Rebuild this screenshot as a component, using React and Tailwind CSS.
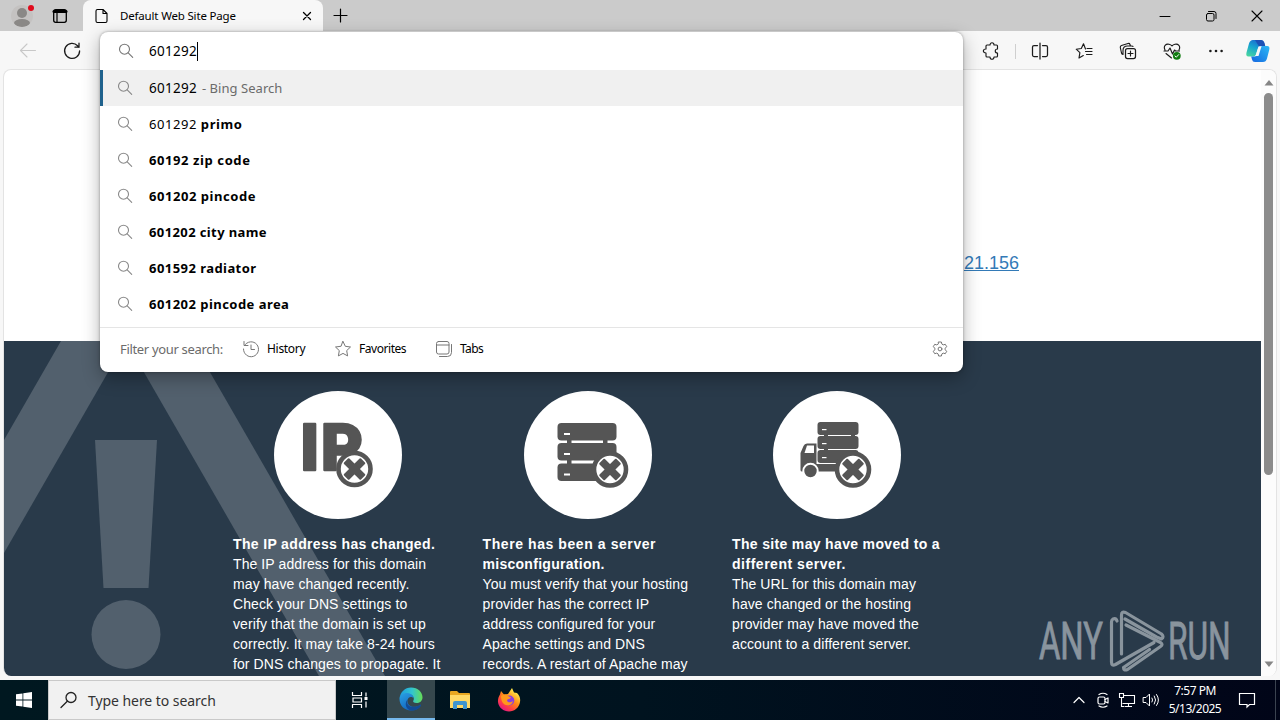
import { useId } from 'react';

const SUGGESTIONS = [
  { match: '601292 ', rest: 'primo', spacing: 'tracking-[0.6px]' },
  { match: '', rest: '60192 zip code', spacing: 'tracking-[0.59px]' },
  { match: '', rest: '601202 pincode', spacing: 'tracking-[0.55px]' },
  { match: '', rest: '601202 city name', spacing: 'tracking-[0.39px]' },
  { match: '', rest: '601592 radiator', spacing: 'tracking-[0.45px]' },
  { match: '', rest: '601202 pincode area', spacing: 'tracking-[0.46px]' },
];

const REASONS = [
  {
    icon: IpIcon,
    title: [['The IP address has changed.', 'tracking-[0.35px]']],
    lines: [
      'The IP address for this domain',
      'may have changed recently.',
      'Check your DNS settings to',
      'verify that the domain is set up',
      'correctly. It may take 8-24 hours',
      'for DNS changes to propagate. It',
    ],
  },
  {
    icon: ServerIcon,
    title: [
      ['There has been a server', 'tracking-[0.58px]'],
      ['misconfiguration.', 'tracking-[0.28px]'],
    ],
    lines: [
      'You must verify that your hosting',
      'provider has the correct IP',
      'address configured for your',
      'Apache settings and DNS',
      'records. A restart of Apache may',
    ],
  },
  {
    icon: TruckIcon,
    title: [
      ['The site may have moved to a', 'tracking-[0.34px]'],
      ['different server.', 'tracking-[0.52px]'],
    ],
    lines: [
      'The URL for this domain may',
      'have changed or the hosting',
      'provider may have moved the',
      'account to a different server.',
    ],
  },
];

function Icon({ size = 16, className = '', children, ...rest }) {
  return (
    <svg
      width={size}
      height={size}
      viewBox={`0 0 ${size} ${size}`}
      fill="none"
      stroke="currentColor"
      strokeLinecap="round"
      strokeLinejoin="round"
      className={`shrink-0 ${className}`}
      {...rest}
    >
      {children}
    </svg>
  );
}

function SearchIcon({ className }) {
  return (
    <Icon className={className}>
      <circle cx="6.5" cy="6.2" r="5" strokeWidth="1.1" />
      <path d="M10.2 9.8 14.7 14.3" strokeWidth="1.1" />
    </Icon>
  );
}

// Ring with a cross, shared by the three round illustrations
function CrossBadge({ x, y }) {
  return (
    <g transform={`translate(${x} ${y})`}>
      <circle r="16" fill="#fff" stroke="#555" strokeWidth="4.6" />
      <g fill="#555" transform="rotate(45)">
        <rect x="-3.8" y="-12" width="7.6" height="24" rx="1" />
        <rect x="-12" y="-3.8" width="24" height="7.6" rx="1" />
      </g>
    </g>
  );
}

function IpIcon() {
  return (
    <svg width="128" height="128" viewBox="0 0 128 128" className="block">
      <circle cx="64" cy="64" r="64" fill="#fff" />
      <g fill="#555" stroke="#555" strokeWidth="2.4" strokeLinejoin="round" fontFamily="Roboto, sans-serif" fontWeight="900" fontSize="64">
        <text x="26" y="78.5">I</text>
        <text x="47" y="78.5" textLength="42" lengthAdjust="spacingAndGlyphs">P</text>
      </g>
      <CrossBadge x={80.5} y={78} />
    </svg>
  );
}

function ServerIcon() {
  return (
    <svg width="128" height="128" viewBox="0 0 128 128" className="block">
      <circle cx="64" cy="64" r="64" fill="#fff" />
      <g fill="#555">
        <rect x="43" y="47" width="4.5" height="30" />
        <rect x="79" y="47" width="4.5" height="8" />
        <rect x="33.5" y="32" width="59" height="17.5" rx="4" />
        <rect x="33.5" y="52" width="59" height="17.5" rx="4" />
        <rect x="33.5" y="72.5" width="59" height="17.5" rx="4" />
      </g>
      <g fill="#fff">
        <rect x="40" y="42" width="6" height="2" />
        <rect x="40" y="62" width="6" height="2" />
        <rect x="40" y="82.5" width="6" height="2" />
      </g>
      <CrossBadge x={86} y={78.5} />
    </svg>
  );
}

function TruckIcon() {
  return (
    <svg width="128" height="128" viewBox="0 0 128 128" className="block">
      <circle cx="64" cy="64" r="64" fill="#fff" />
      <g fill="#555">
        <rect x="51" y="40" width="4" height="30" />
        <rect x="78" y="40" width="4" height="18" />
        <rect x="44.5" y="31" width="41" height="13" rx="3" />
        <rect x="44.5" y="45" width="41" height="13" rx="3" />
        <rect x="44.5" y="59" width="41" height="13" rx="3" />
        <rect x="40" y="73" width="40" height="7.5" />
        <path d="M43.5 52.5H34Q31.5 52.5 30.5 55L27.5 62V79Q27.5 80.500 29 80.500H43.500Z" />
      </g>
      <path d="M34 54.500H41V62H31.500Z" fill="#fff" />
      <g fill="#fff">
        <rect x="49" y="38" width="4.500" height="1.200" />
        <rect x="49" y="52" width="4.500" height="1.200" />
        <rect x="49" y="66" width="4.500" height="1.200" />
      </g>
      <circle cx="37.500" cy="80" r="7.200" fill="#555" stroke="#fff" strokeWidth="2" />
      <CrossBadge x={80} y={78.5} />
    </svg>
  );
}

function TabStrip() {
  return (
    <div className="flex h-[31px] bg-[#cbcbcb] text-black">
      <div className="ml-[11px] mt-[5px] h-[22px] w-[22px] overflow-hidden rounded-full bg-[#c4c2c1]">
        <div className="mx-auto mt-[3px] h-[10px] w-[10px] rounded-full bg-[#8a8886]" />
        <div className="mx-auto mt-[1px] h-[8px] w-[16px] rounded-[50%] bg-[#8a8886]" />
      </div>
      <div className="-ml-[5px] mt-[5px] h-[6px] w-[6px] rounded-full bg-[#e00b1c]" />
      <Icon className="ml-[18px] mt-2">
        <rect x="1.700" y="1.700" width="12.600" height="12.600" rx="2" strokeWidth="1.300" />
        <path d="M2 3.500h12" strokeWidth="3" />
        <path d="M5 4v10" strokeWidth="1.200" />
      </Icon>
      <div className="ml-[15px] flex h-[31px] w-[240px] items-center rounded-t-lg bg-[#f7f7f7] pl-[11px] pr-[11px]">
        <Icon>
          <path d="M3.500 1.500h5.500l4 4v7.500q0 1.500-1.500 1.500h-8q-1.500 0-1.500-1.500v-10q0-1.500 1.500-1.500zM9 1.500v4h4" strokeWidth="1.100" />
        </Icon>
        <span className="ml-[10px] whitespace-nowrap font-['Noto_Sans',sans-serif] text-[11.5px] tracking-[-0.17px]">Default Web Site Page</span>
        <Icon size={10} className="ml-auto">
          <path d="M1.500 1.500l7 7M8.500 1.500l-7 7" strokeWidth="1.300" />
        </Icon>
      </div>
      <Icon className="ml-[9px] mt-2">
        <path d="M8.500 1v13M2 7.500h13" strokeWidth="1.200" />
      </Icon>
      <div className="ml-auto flex items-center gap-[34px] pr-[17px]">
        <Icon size={12}><path d="M1 6.500h10" /></Icon>
        <Icon size={12}>
          <rect x="1.500" y="3.500" width="7.500" height="7.500" rx="1.500" />
          <path d="M3.500 1.500h5.500q2 0 2 2v5" />
        </Icon>
        <Icon size={12}><path d="M1 1l10 10M11 1 1 11" strokeWidth="1.100" /></Icon>
      </div>
    </div>
  );
}

function CopilotLogo() {
  const id = useId();
  return (
    <svg width="26" height="26" viewBox="0 0 26 26" className="shrink-0">
      <defs>
        <linearGradient id={`${id}a`} x1="0" y1="1" x2="0.500" y2="0">
          <stop offset="0" stopColor="#4fdc9a" />
          <stop offset="0.600" stopColor="#17a5cf" />
          <stop offset="1" stopColor="#1a6fd0" />
        </linearGradient>
        <linearGradient id={`${id}b`} x1="0" y1="1" x2="1" y2="0">
          <stop offset="0" stopColor="#1567e0" />
          <stop offset="1" stopColor="#2bb8f5" />
        </linearGradient>
      </defs>
      <path d="M8 2h8q2.500 0 3.200 2.500l1 3.500h-4q-2.500 0-3.200 2.500l-2 6q-.8 2-2.500 2h-5q-3 0-2-4l2.500-9q1-3.500 4-3.500z" fill={`url(#${id}a)`} />
      <path d="M10 2h6q2.500 0 3.200 2.500l1 3.500h-4l-2.500 0z" fill="#1c51b5" />
      <path d="M18 24h-8q-2.500 0-3-2.500l-.8-3h3.300q2.500 0 3.200-2.500l2-6q.8-2 2.500-2h5q3 0 2 4l-2.200 8.500q-1 3.500-4 3.500z" fill={`url(#${id}b)`} />
      <path d="M13.500 8.500h3l-3 9.500h-3z" fill="#f7f7f7" />
    </svg>
  );
}

function Toolbar() {
  return (
    <div className="flex h-[38px] items-center bg-[#f7f7f7] pt-[2px] text-[#1b1b1b]">
      <Icon size={18} className="ml-[19px] text-[#c8c8c8]">
        <path d="M16.500 8.500H1.500M8 2 1.500 8.500 8 15" strokeWidth="1.100" />
      </Icon>
      <Icon size={18} className="ml-[26px]">
        <path d="M16.600 9a7.500 7.500 0 1 1-2-5.200l1.400 1.400M16 1.200v4h-4" strokeWidth="1.300" />
      </Icon>
      <div className="ml-auto flex items-center">
        <Icon size={18}>
          <path d="M5 3h3c0-3 4-3 4 0h2.500q1 0 1 1v3c-3 0-3 4 0 4v3q0 1-1 1H12c0 3-4 3-4 0H5q-1 0-1-1v-3c-3.500 0-3.500-4 0-4v-3q0-1 1-1z" strokeWidth="1.150" />
        </Icon>
        <div className="ml-[15px] h-[15px] w-px bg-[#cfcfcf]" />
        <Icon size={18} className="ml-[15px]">
          <path d="M6.500 3.500h-3.500q-1.500 0-1.500 1.500v8q0 1.500 1.500 1.500h3.500M11.500 3.500h3.500q1.500 0 1.500 1.500v8q0 1.500-1.500 1.500h-3.500M9 1v16" strokeWidth="1.250" />
        </Icon>
        <Icon size={18} className="ml-[26px]">
          <path d="M10.500 7 8.500 1.800 6.300 6.500 1.200 7.200 4.900 10.700 4 16 8.300 13.600M12 6.500h5M10.500 9.500h6.500M11.500 12.500h5.500" strokeWidth="1.150" />
        </Icon>
        <Icon size={18} className="ml-[26px]">
          <rect x="6.500" y="6.500" width="10" height="10" rx="2" strokeWidth="1.250" />
          <path d="M11.500 9v5M9 11.500h5M4 12.500q-1.200-.3-1.500-1.500L1.300 5.500q-.2-1.500 1.200-2l6.500-2q1.500-.4 2 1l.3 1M4 12.500v-4q0-4.500 4.500-4.500h4q1.500 0 1.500.5" strokeWidth="1.150" />
        </Icon>
        <Icon size={18} className="ml-[26px]">
          <path d="M2 8C0 4 3 1.500 6 2.200 8 2.700 9 4 9 4s1-1.300 3-1.800c3-.7 6 1.800 4 5.800M1 9h4l2-3 2.500 6 2-4 1 1h4M3 11.500l5.500 4.500" strokeWidth="1.150" />
          <circle cx="13.800" cy="13.800" r="3.900" fill="#107c10" stroke="none" />
          <path d="m12 14 1.300 1.200 2.400-2.600" stroke="#fff" />
        </Icon>
        <Icon size={18} className="ml-[26px]">
          <g fill="currentColor" stroke="none">
            <circle cx="3.400" cy="9" r="1.300" />
            <circle cx="9" cy="9" r="1.300" />
            <circle cx="14.600" cy="9" r="1.300" />
          </g>
        </Icon>
        <div className="ml-[20px] mr-[9px]">
          <CopilotLogo />
        </div>
      </div>
    </div>
  );
}

function AnyRunLogo() {
  return (
    <svg width="204" height="64" viewBox="0 0 204 64" className="absolute bottom-[3px] right-[20px] opacity-55">
      <g fill="#d9dee2" fontFamily="Roboto, sans-serif" fontSize="52" fontWeight="400" stroke="#d9dee2" strokeWidth="0.8">
        <text x="0" y="50" transform="translate(2 0) scale(0.63 1)">ANY</text>
        <text x="0" y="50" transform="translate(131 0) scale(0.61 1)">RUN</text>
      </g>
      <g fill="none" stroke="#d9dee2" strokeWidth="3.200" strokeLinecap="round" strokeLinejoin="round" transform="translate(-2.500 0)">
        <path d="M82.500 12q-1-3-4-2-1.500 1-1.500 3v40q0 4.500 4 2.500l38.500-22" />
        <path d="M87 45V6q0-4 4-2.500l36 21.500q3 3 0 5l-5-2L90.500 10" />
        <path d="M91.500 16l34.500 17.500q3 2 0 4L93 60.500q-4 1.500-4-2l26-18" />
      </g>
    </svg>
  );
}

function ErrorPage() {
  return (
    <div className="flex w-[1257px] flex-col font-['Liberation_Sans',Arial,sans-serif]">
      <div className="flex h-[271px] items-start justify-end pr-[242px] pt-[180px]">
        <a className="text-[18px] leading-[26px] text-[#337ab7] underline">21.156</a>
      </div>
      <div className="relative flex-1 overflow-hidden bg-[#293a4a] text-white">
        <svg width="420" height="335" viewBox="0 0 420 335" fill="#52606d" className="absolute left-0 top-0">
          <path d="M57 0h65L0 212V99z" />
          <path d="M122 0h66l193 335h-66z" />
          <path d="M91 99h62l-8.500 148h-45z" />
          <circle cx="122" cy="293.500" r="34.500" />
        </svg>
        <div className="relative flex gap-[39.5px] pl-[229px] pt-[50px]">
          {REASONS.map((r) => (
            <div key={r.lines[0]} className="w-[210px] text-[14px] leading-5">
              <div className="mb-[15px] flex justify-center">
                <r.icon />
              </div>
              {r.title.map(([text, spacing]) => (
                <p key={text} className={`whitespace-nowrap font-bold ${spacing}`}>{text}</p>
              ))}
              {r.lines.map((l) => (
                <p key={l} className="whitespace-nowrap tracking-[0.09px]">{l}</p>
              ))}
            </div>
          ))}
        </div>
        <AnyRunLogo />
      </div>
    </div>
  );
}

function Scrollbar() {
  return (
    <div className="flex flex-1 flex-col items-center bg-[#fcfcfc] text-[#858585]">
      <svg width="10" height="6" viewBox="0 0 10 6" fill="currentColor" className="mt-[10px]">
        <path d="M5 0l4.500 5.500h-9z" />
      </svg>
      <div className="mt-[7px] h-[382px] w-[9px] rounded-full bg-[#8b8b8b]" />
      <svg width="10" height="6" viewBox="0 0 10 6" fill="currentColor" className="mb-[9px] mt-auto">
        <path d="M.5.500h9L5 6z" />
      </svg>
    </div>
  );
}

function Omnibox() {
  return (
    <div className="absolute left-[100px] top-8 flex h-[340px] w-[863px] flex-col overflow-hidden rounded-lg bg-white font-['Noto_Sans',sans-serif] text-[14px] text-black shadow-[0_6px_18px_rgba(0,0,0,0.3),0_0_3px_rgba(0,0,0,0.35)]">
      <div className="flex h-[38px] items-center pl-[18px]">
        <SearchIcon className="text-[#777]" />
        <span className="ml-[15px] text-[13.5px] tracking-[0.27px]">601292</span>
        <span className="h-[19px] w-px bg-black" />
      </div>
      <div className="flex h-9 items-center border-l-[3px] border-[#1f628d] bg-[#f0f0f0] pl-[14px]">
        <SearchIcon className="text-[#888]" />
        <span className="ml-4 pt-px text-[13.5px] tracking-[0.27px]">601292</span>
        <span className="ml-[5px] whitespace-pre pt-px text-[13px] tracking-[0.04px] text-[#6b6b6b]">- Bing Search</span>
      </div>
      {SUGGESTIONS.map((s) => (
        <div key={s.rest} className="flex h-9 items-center pl-[17px]">
          <SearchIcon className="text-[#8a8a8a]" />
          <span className="ml-4 whitespace-pre pt-px text-[13px]">
            <span className="tracking-[0.55px]">{s.match}</span>
            <b className={`font-bold ${s.spacing}`}>{s.rest}</b>
          </span>
        </div>
      ))}
      <div className="mt-[5px] flex flex-1 items-center border-t border-[#e5e5e5] pb-[2px] pl-5 pr-[15px] text-[12px]">
        <span className="w-[122px] whitespace-nowrap pt-px text-[13px] tracking-[-0.33px] text-[#6b6b6b]">Filter your search:</span>
        <Icon size={18} className="text-[#777]">
          <path d="M2.500 5.500a7.500 7.500 0 1 1-1 3.500M2 1.500v4h4M9 5v4.500h3.500" />
        </Icon>
        <span className="ml-[7px] w-[67px] tracking-[-0.3px]">History</span>
        <Icon size={18} className="text-[#777]">
          <path d="M9 1.500l2.300 4.800 5.200.7-3.800 3.600.9 5.300L9 13.400l-4.600 2.500.9-5.300L1.500 7l5.200-.7z" />
        </Icon>
        <span className="ml-[7px] w-[76px] tracking-[-0.45px]">Favorites</span>
        <Icon size={18} className="text-[#777]">
          <rect x="1.500" y="1.500" width="12.500" height="12.500" rx="2" />
          <path d="M1.500 5h12.500M4.500 16.500h8q4 0 4-4v-8" />
        </Icon>
        <span className="ml-[7px] tracking-[-0.6px]">Tabs</span>
        <Icon size={16} className="ml-auto text-[#777]">
          <path d="M6.600 1h2.800l.5 2.100 1.300.8 2.100-.6 1.400 2.400L13.200 7.200v1.600l1.500 1.500-1.400 2.400-2.100-.6-1.300.8-.5 2.100H6.600l-.5-2.100-1.300-.8-2.100.6-1.400-2.400 1.500-1.500V7.200L1.300 5.700l1.400-2.400 2.100.6 1.300-.8z" />
          <circle cx="8" cy="8" r="1.900" />
        </Icon>
      </div>
    </div>
  );
}

function EdgeLogo() {
  const id = useId();
  return (
    <svg width="24" height="24" viewBox="0 0 24 24">
      <defs>
        <linearGradient id={`${id}a`} x1="0" y1="0.500" x2="1" y2="0.500">
          <stop offset="0" stopColor="#1d9be0" />
          <stop offset="0.550" stopColor="#32c5cf" />
          <stop offset="1" stopColor="#66dd55" />
        </linearGradient>
        <linearGradient id={`${id}b`} x1="0" y1="0" x2="0.700" y2="1">
          <stop offset="0" stopColor="#2aa1e5" />
          <stop offset="1" stopColor="#0f5cb8" />
        </linearGradient>
      </defs>
      <path d="M.5 12C1 5 6 .5 12 .5c7 0 11.500 5 11.500 9.700 0 4-3 5.800-6 5.800-2.500 0-4-1-3.200-2.200C16 11.500 14 7 9 7 5 7 1.500 9 .5 12z" fill={`url(#${id}a)`} />
      <path d="M.5 12C1 8.500 4 5.700 8.500 6c4 .3 6.300 3.200 6 5.500C14 10 11 9.500 9.500 11c-2.500 3-.5 8 4 8.700 3 .5 5.500-.4 7.500-1.700 1-.5 1.200 0 .8.700C20 21.500 16.500 23.500 12 23.500 5.500 23.500.5 18.500.5 12z" fill={`url(#${id}b)`} />
      <path d="M8.500 12.500c-1.500 4 1 7.300 5 7.300 3 .4 5.500-.5 7.500-1.800 1-.5 1.200 0 .8.700C20 21.500 16.500 23.500 13 23.500c-6 0-8-7-4.500-11z" fill="#134a94" />
    </svg>
  );
}

function FolderIcon() {
  return (
    <svg width="22" height="20" viewBox="0 0 22 20">
      <path d="M1 2q0-1 1-1h6l2 2h10q1 0 1 1v4H1z" fill="#e8a721" />
      <path d="M1 5h20v13H1z" fill="#ffd966" />
      <path d="M4 19v-6q0-2 2-2h10q2 0 2 2v6h-4v-4H8v4z" fill="#3f95cf" />
    </svg>
  );
}

function FirefoxLogo() {
  const id = useId();
  return (
    <svg width="24" height="24" viewBox="0 0 24 24">
      <defs>
        <linearGradient id={id} x1="0.850" y1="0.050" x2="0.200" y2="0.950">
          <stop offset="0.100" stopColor="#ffe84a" />
          <stop offset="0.450" stopColor="#ff8b16" />
          <stop offset="0.750" stopColor="#ff3f43" />
          <stop offset="1" stopColor="#e31587" />
        </linearGradient>
      </defs>
      <path d="M3 6.500 4 3l3 3.500 4-.5 4-6 2 4.500 3 .5c3 3 3.500 6 3 9-.8 5.500-5.500 9.500-11 9.500S1.500 19.500 1 14c-.2-3 .7-5.500 2-7.500z" fill={`url(#${id})`} />
      <circle cx="12.300" cy="12.500" r="5" fill="#8a3fe0" />
      <path d="M4 8c3-2.500 6-1.500 7 0l3 1.500c-1 2-3.500 1-4 3 .5 2.500 4 2 6 .5-.5 3-3 4.500-5.500 4.200C6 17 4 13 4 8z" fill="#ff981c" />
    </svg>
  );
}

function Taskbar() {
  return (
    <div className="flex h-10 items-center bg-linear-to-r from-[#001820] via-[#00131f] to-[#010518] font-['Noto_Sans',sans-serif] text-white">
      <div className="flex w-12 justify-center">
        <svg width="16" height="16" viewBox="0 0 16 16" fill="#fff">
          <path d="M0 2.300 6.500 1.400v6.200H0zM7.300 1.300 16 0v7.600H7.300zM0 8.400h6.500v6.200L0 13.700zM7.300 8.400H16V16l-8.700-1.300z" />
        </svg>
      </div>
      <div className="flex h-10 w-72 items-center border border-[#c9c9c9] bg-[#f1f1f1] pl-[11px] text-[#333]">
        <Icon size={18} className="text-[#222]">
          <circle cx="11" cy="6.500" r="5" strokeWidth="1.300" />
          <path d="M7.300 10.200 1 16.500" strokeWidth="1.300" />
        </Icon>
        <span className="ml-[10px] whitespace-nowrap text-[14px] tracking-[-0.06px]">Type here to search</span>
      </div>
      <div className="flex w-[51px] justify-center pr-[3px]">
        <Icon size={18} strokeLinecap="butt">
          <path d="M1.500 1v3.500h9V1M1.500 17v-3.500h9V17M2 6.500v5M10.500 6.500v5M2 7h8.500M2 11h8.500M15 1.500v4M15 10.500v6" strokeWidth="1.200" />
          <path d="M13.500 7.500h3" strokeWidth="3" />
        </Icon>
      </div>
      <div className="flex h-10 w-12 items-center justify-center border-b-2 border-[#76b9ed] bg-[#35474d]">
        <EdgeLogo />
      </div>
      <div className="flex w-[49px] justify-center"><FolderIcon /></div>
      <div className="flex w-[50px] justify-center"><FirefoxLogo /></div>
      <div className="ml-auto flex items-center">
        <Icon size={12}><path d="M1 8.500l5-5 5 5" strokeWidth="1.200" /></Icon>
        <Icon size={16} className="ml-[10px]">
          <rect x="3" y="5" width="7" height="7" rx="1.500" strokeWidth="1.200" />
          <path d="M10 7.500l3-1.500v5L10 9.500M4 2.500q4-2.500 8 0M4 14q4 2.500 8 0" strokeWidth="1.200" />
        </Icon>
        <Icon size={18} className="ml-[7px]" strokeLinejoin="miter" strokeLinecap="butt">
          <path d="M6 4.500h10.500v8H4.500M10.500 12.500v3M7 15.500h7M1.500 2.500h4v4h-4zM3.500 6.500v9h3" strokeWidth="1.100" />
        </Icon>
        <Icon size={18} className="ml-[6px]">
          <path d="M1.500 6.500h2.500L7.500 3v12L4 11.500H1.500zM10 7q1.300 2 0 4M12.300 5q2.700 4 0 8M14.500 3.500q4 5.500 0 11" />
        </Icon>
        <div className="ml-2 w-[54px] whitespace-nowrap text-center text-[12px] leading-[18px] tracking-[-0.5px]">
          <div>7:57 PM</div>
          <div>5/13/2025</div>
        </div>
        <Icon size={18} className="ml-[16px]" strokeLinejoin="miter">
          <path d="M1.500 2.500h15v11h-5L9 16v-2.500H1.500z" strokeWidth="1.200" />
        </Icon>
        <div className="ml-[19px] mr-1 h-10 w-px bg-[#3b4350]" />
      </div>
    </div>
  );
}

export default function App() {
  return (
    <div className="relative flex h-[720px] w-[1280px] flex-col overflow-hidden bg-[#f7f7f7]">
      <TabStrip />
      <Toolbar />
      <div className="mx-[3px] mb-1 flex flex-1 overflow-hidden rounded-lg border border-b-0 border-[#e3e3e3] bg-white">
        <ErrorPage />
        <Scrollbar />
      </div>
      <Omnibox />
      <Taskbar />
    </div>
  );
}
